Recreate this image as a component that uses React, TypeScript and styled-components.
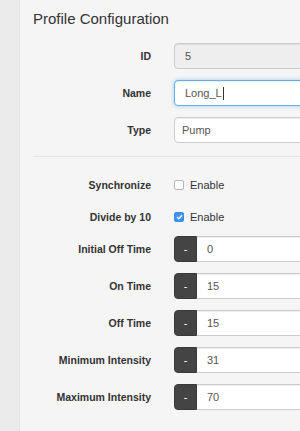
import React from 'react';
import styled, { createGlobalStyle } from 'styled-components';

const GlobalStyle = createGlobalStyle`
  html, body {
    margin: 0;
    padding: 0;
    background: #ebebeb;
    overflow: hidden;
  }
  body {
    font-family: "Liberation Sans", Arial, sans-serif;
    color: #333;
  }
`;

const Page = styled.div`
  display: flex;
  width: 300px;
  height: 431px;
  overflow: hidden;
`;

const SideStrip = styled.div`
  width: 19px;
  flex: none;
  background: #ebebeb;
  border-right: 1px solid #e2e2e2;
`;

const Panel = styled.div`
  flex: 1;
  background: #f5f5f5;
  padding: 10px 0 0 13px;
  min-width: 0;
`;

const Title = styled.h3`
  margin: 0 0 15px;
  font-size: 15px;
  font-weight: normal;
  line-height: 18px;
  color: #333;
  white-space: nowrap;
`;

const Row = styled.div<{ $h?: number; $mb?: number }>`
  display: grid;
  grid-template-columns: 118px 200px;
  column-gap: 23px;
  align-items: center;
  height: ${(p) => p.$h ?? 26}px;
  margin-bottom: ${(p) => p.$mb ?? 11}px;
`;

const Label = styled.label`
  text-align: right;
  font-size: 10.5px;
  font-weight: bold;
  color: #333;
  white-space: nowrap;
`;

const TextInput = styled.div<{ $disabled?: boolean; $focus?: boolean }>`
  box-sizing: border-box;
  height: 26px;
  display: flex;
  align-items: center;
  padding-left: ${(p) => (p.$disabled || p.$focus ? 10 : 7)}px;
  font-size: 11px;
  color: #555;
  background: ${(p) => (p.$disabled ? '#eeeeee' : '#fff')};
  border: 1px solid ${(p) => (p.$focus ? '#66afe9' : '#cccccc')};
  border-radius: 4px;
  box-shadow: ${(p) =>
    p.$focus
      ? 'inset 0 1px 1px rgba(0,0,0,.075), 0 0 4px rgba(102,175,233,.6)'
      : 'inset 0 1px 1px rgba(0,0,0,.075)'};
`;

const Caret = styled.span`
  display: inline-block;
  width: 1px;
  height: 13px;
  background: #333;
  margin-left: 1px;
`;

const Divider = styled.hr`
  border: 0;
  border-top: 1px solid #e3e3e3;
  margin: 13px 0 18px 0;
  width: 280px;
`;

const CheckWrap = styled.div`
  display: flex;
  align-items: center;
  gap: 6px;
  font-size: 11px;
  color: #333;
`;

const Box = styled.span<{ $checked?: boolean }>`
  box-sizing: border-box;
  width: 10px;
  height: 10px;
  border-radius: 2px;
  border: 1px solid ${(p) => (p.$checked ? '#3a8ee6' : '#b5b5b5')};
  background: ${(p) => (p.$checked ? '#3b94f0' : '#fff')};
  display: flex;
  align-items: center;
  justify-content: center;
`;

const Stepper = styled.div`
  display: flex;
  height: 26px;
`;

const MinusButton = styled.button`
  box-sizing: border-box;
  width: 23px;
  height: 26px;
  flex: none;
  border: 1px solid #3a3a3a;
  border-radius: 4px 0 0 4px;
  background: #444444;
  color: #fff;
  font-family: inherit;
  font-size: 11px;
  padding: 0;
  line-height: 24px;
`;

const StepInput = styled.div`
  box-sizing: border-box;
  flex: 1;
  height: 26px;
  display: flex;
  align-items: center;
  padding-left: 10px;
  font-size: 11px;
  color: #555;
  background: #fff;
  border: 1px solid #cccccc;
  border-left: 0;
  box-shadow: inset 0 1px 1px rgba(0, 0, 0, 0.075);
`;

const steppers = [
  { label: 'Initial Off Time', value: '0' },
  { label: 'On Time', value: '15' },
  { label: 'Off Time', value: '15' },
  { label: 'Minimum Intensity', value: '31' },
  { label: 'Maximum Intensity', value: '70' },
];

const Check = () => (
  <svg width="7" height="6" viewBox="0 0 7 6">
    <path d="M1 3 L2.8 4.7 L6 1.2" stroke="#fff" strokeWidth="1.3" fill="none" />
  </svg>
);

const App = () => (
  <>
    <GlobalStyle />
    <Page>
      <SideStrip />
      <Panel>
        <Title>Profile Configuration</Title>
        <Row>
          <Label>ID</Label>
          <TextInput $disabled>5</TextInput>
        </Row>
        <Row>
          <Label>Name</Label>
          <TextInput $focus>
            Long_L<Caret />
          </TextInput>
        </Row>
        <Row>
          <Label>Type</Label>
          <TextInput>Pump</TextInput>
        </Row>
        <Divider />
        <Row $h={20} $mb={12}>
          <Label>Synchronize</Label>
          <CheckWrap>
            <Box />
            Enable
          </CheckWrap>
        </Row>
        <Row $h={20} $mb={9}>
          <Label>Divide by 10</Label>
          <CheckWrap>
            <Box $checked>
              <Check />
            </Box>
            Enable
          </CheckWrap>
        </Row>
        {steppers.map((s) => (
          <Row key={s.label}>
            <Label>{s.label}</Label>
            <Stepper>
              <MinusButton>-</MinusButton>
              <StepInput>{s.value}</StepInput>
            </Stepper>
          </Row>
        ))}
      </Panel>
    </Page>
  </>
);

export default App;
